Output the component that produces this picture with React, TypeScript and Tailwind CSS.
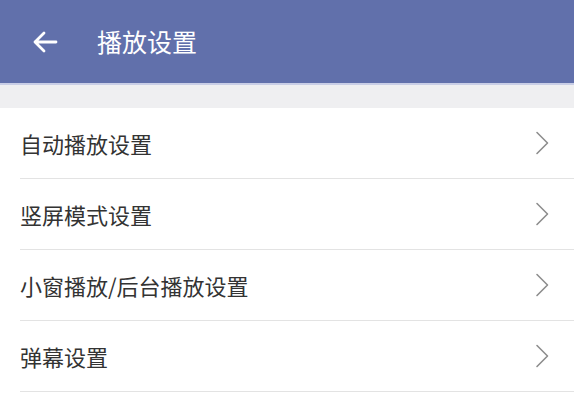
import React from "react";

const items = ["自动播放设置", "竖屏模式设置", "小窗播放/后台播放设置", "弹幕设置"];

function Chevron() {
  return (
    <svg width="14" height="24" viewBox="0 0 14 24" fill="none" className="shrink-0">
      <path d="M2 1.5 L12.5 12 L2 22.5" stroke="#8e8e8e" strokeWidth="1.6" strokeLinecap="round" strokeLinejoin="round" />
    </svg>
  );
}

export default function App() {
  return (
    <div
      className="w-[574px] h-[400px] overflow-hidden bg-white"
      style={{ fontFamily: '"Noto Sans CJK SC", "Noto Sans", sans-serif' }}
    >
      <div className="h-[85px] bg-[#6170ab] flex items-center border-b-[2px] border-[#c9cee6]">
        <div className="w-[97px] flex items-center pl-[32px]">
          <svg width="26" height="24" viewBox="0 0 26 24" fill="none">
            <path d="M24 12 H3 M12 3 L3 12 L12 21" stroke="white" strokeWidth="2.8" strokeLinecap="round" strokeLinejoin="round" />
          </svg>
        </div>
        <span className="text-white text-[25px] leading-none">播放设置</span>
      </div>
      <div className="h-[23px] bg-[#efeff1]" />
      <div className="flex flex-col">
        {items.map((t) => (
          <div key={t} className="pl-[20px]">
            <div className="h-[71px] flex items-center justify-between pr-[25px] border-b border-[#e3e3e3]">
              <span className="text-[22px] text-[#333333] leading-none">{t}</span>
              <Chevron />
            </div>
          </div>
        ))}
      </div>
    </div>
  );
}
